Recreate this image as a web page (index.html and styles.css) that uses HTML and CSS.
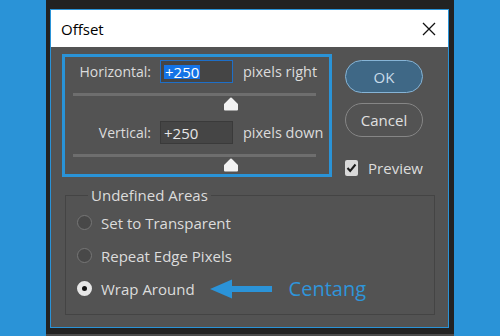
FILE: index.html
```html
<!DOCTYPE html>
<html lang="en">
<head>
    <meta charset="UTF-8">
    <meta name="viewport" content="width=device-width, initial-scale=1.0">
    <title>Offset</title>
    <link rel="stylesheet" href="styles.css">
</head>
<body>
    <div class="frame">
        <div class="dialog">
            <div class="titlebar">
                <span class="title">Offset</span>
                <svg class="close" width="14" height="14" viewBox="0 0 14 14">
                    <path d="M1 1 L13 13 M13 1 L1 13" stroke="#111" stroke-width="1.3" fill="none"/>
                </svg>
            </div>
            <div class="content">
                <div class="top-row">
                    <div class="offset-box">
                        <div class="field-row">
                            <label class="field-label">Horizontal:</label>
                            <div class="field-input focused"><span class="selected">+250</span></div>
                            <span class="unit">pixels right</span>
                        </div>
                        <div class="slider">
                            <div class="track"></div>
                            <svg class="thumb" width="16" height="14" viewBox="0 0 16 14">
                                <path d="M8 1.5 L14 7.5 V12.5 H2 V7.5 Z" fill="#f2f2f2" stroke="#f2f2f2" stroke-width="2" stroke-linejoin="round"/>
                            </svg>
                        </div>
                        <div class="field-row">
                            <label class="field-label">Vertical:</label>
                            <div class="field-input"><span>+250</span></div>
                            <span class="unit">pixels down</span>
                        </div>
                        <div class="slider">
                            <div class="track"></div>
                            <svg class="thumb" width="16" height="14" viewBox="0 0 16 14">
                                <path d="M8 1.5 L14 7.5 V12.5 H2 V7.5 Z" fill="#f2f2f2" stroke="#f2f2f2" stroke-width="2" stroke-linejoin="round"/>
                            </svg>
                        </div>
                    </div>
                    <div class="actions">
                        <button class="btn btn-ok">OK</button>
                        <button class="btn btn-cancel">Cancel</button>
                        <div class="check-row">
                            <span class="checkbox">
                                <svg width="11" height="10" viewBox="0 0 11 10">
                                    <path d="M1.5 5 L4.2 8 L9.5 1.5" stroke="#1c1c1c" stroke-width="2" fill="none"/>
                                </svg>
                            </span>
                            <span>Preview</span>
                        </div>
                    </div>
                </div>
                <fieldset class="areas">
                    <legend>Undefined Areas</legend>
                    <div class="radio-row"><span class="radio"></span><span>Set to Transparent</span></div>
                    <div class="radio-row"><span class="radio"></span><span>Repeat Edge Pixels</span></div>
                    <div class="radio-row">
                        <span class="radio checked"></span><span>Wrap Around</span>
                        <svg class="arrow" width="62" height="20" viewBox="0 0 62 20">
                            <path d="M0 10 L22 0.5 V7 H62 V13 H22 V19.5 Z" fill="#2b93d8"/>
                        </svg>
                        <span class="note">Centang</span>
                    </div>
                </fieldset>
            </div>
        </div>
    </div>
</body>
</html>
```

FILE: styles.css
```css
body {
    margin: 0;
    background: #2a93d7;
    font-family: "Open Sans", "Noto Sans", sans-serif;
    font-size: 14px;
    color: #dcdcdc;
}
.frame {
    width: 408px;
    height: 336px;
    box-sizing: border-box;
    margin: 0 auto;
    padding: 9px 4px 0 4px;
    background: #222;
    border-bottom: 2px solid #4a4a4a;
}
.dialog {
    width: 399px;
    height: 319px;
    box-sizing: border-box;
    border: 1px solid #2a93d7;
    background: #535353;
}
.titlebar {
    height: 37px;
    background: #fff;
    display: flex;
    align-items: center;
    justify-content: space-between;
    padding: 0 12px 0 10px;
}
.title {
    color: #000;
    font-size: 15px;
}
.content {
    padding: 7px 0 0 11px;
}
.top-row {
    display: flex;
}
.offset-box {
    width: 270px;
    height: 123px;
    box-sizing: border-box;
    border: 3px solid #2a93d7;
    padding-top: 3px;
}
.field-row {
    display: flex;
    align-items: center;
    height: 23px;
}
.field-label {
    width: 86px;
    text-align: right;
}
.field-input {
    width: 73px;
    height: 23px;
    box-sizing: border-box;
    margin: 0 10px 0 9px;
    background: #454545;
    border: 1px solid #3a3a3a;
    padding: 0 0 0 3px;
    display: flex;
    align-items: center;
    font-size: 15px;
    color: #e6e6e6;
}
.field-input.focused {
    border-color: #1e6fc8;
}
.selected {
    background: #1473e6;
    color: #fff;
    line-height: 14px;
    padding: 0 1px;
}
.unit {
    font-size: 14.5px;
}
.slider {
    position: relative;
    height: 20px;
    margin: 10px 0 8px 8px;
    width: 243px;
}
.track {
    height: 3px;
    background: #6e6e6e;
}
.thumb {
    position: absolute;
    left: 150px;
    top: 4px;
}
.actions {
    margin: 6px 0 0 13px;
    width: 78px;
    display: flex;
    flex-direction: column;
}
.btn {
    font-family: inherit;
    font-size: 15px;
    height: 33px;
    border-radius: 17px;
    padding: 0;
    background: transparent;
}
.btn-ok {
    background: #3f6886;
    border: 1px solid #86b4d6;
    color: #c9dbe9;
}
.btn-cancel {
    margin-top: 10px;
    height: 34px;
    border: 1px solid #868686;
    color: #e0e0e0;
}
.check-row {
    margin-top: 21px;
    display: flex;
    align-items: center;
    gap: 10px;
    font-size: 15px;
}
.checkbox {
    width: 15px;
    height: 16px;
    border-radius: 2px;
    background: #d9d9d9;
    display: flex;
    align-items: center;
    justify-content: center;
}
.areas {
    margin: 8px 0 0 3px;
    width: 370px;
    height: 129px;
    box-sizing: border-box;
    border: 1px solid #444;
    padding: 2px 0 0 11px;
}
.areas legend {
    margin-left: 11px;
    padding: 0 3px;
    font-size: 15px;
    line-height: 18px;
}
.radio-row {
    display: flex;
    align-items: center;
    height: 33px;
    gap: 9px;
    font-size: 15px;
}
.radio {
    width: 15px;
    height: 15px;
    box-sizing: border-box;
    border-radius: 50%;
    border: 1px solid #767676;
    background: #484848;
}
.radio.checked {
    border: 5px solid #e6e6e6;
    background: #111;
}
.arrow {
    margin-left: 6px;
}
.note {
    margin-left: 8px;
    color: #2f95da;
    font-size: 20px;
}
```
